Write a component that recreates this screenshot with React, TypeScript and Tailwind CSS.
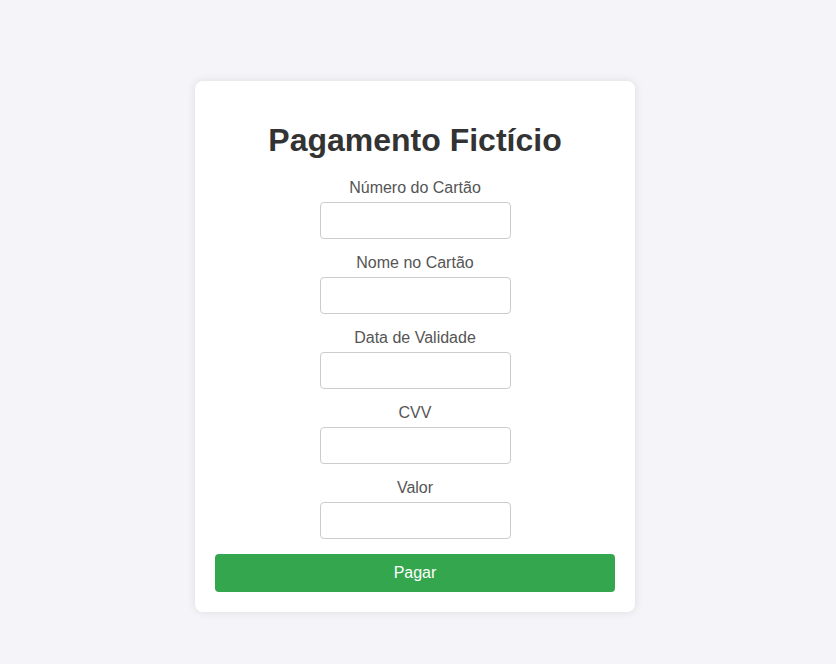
import React from 'react';

const fields = ['Número do Cartão', 'Nome no Cartão', 'Data de Validade', 'CVV', 'Valor'];

export default function App() {
  return (
    <div className="min-h-[664px] bg-[#f4f4f9] pt-[81px] font-['Liberation_Sans',Arial,sans-serif]">
      <div className="ml-[195px] w-[440px] rounded-[8px] bg-white p-[20px] shadow-[0_0_10px_rgba(0,0,0,0.1)]">
        <h1 className="mt-[21px] mb-[20px] text-center text-[32px] font-bold leading-[37px] text-[#333]">
          Pagamento Fictício
        </h1>
        <form className="flex flex-col items-center" onSubmit={e => e.preventDefault()}>
          {fields.map(label => (
            <div key={label} className="flex flex-col items-center">
              <label className="text-[16px] leading-[18px] text-[#555]">{label}</label>
              <input
                type="text"
                className="mt-[5px] mb-[15px] h-[37px] w-[191px] rounded-[4px] border border-[#ccc] px-[10px] text-[14px] outline-none"
              />
            </div>
          ))}
          <button
            type="submit"
            className="h-[38px] w-full rounded-[4px] bg-[#34a64d] text-[16px] text-white"
          >
            Pagar
          </button>
        </form>
      </div>
    </div>
  );
}
